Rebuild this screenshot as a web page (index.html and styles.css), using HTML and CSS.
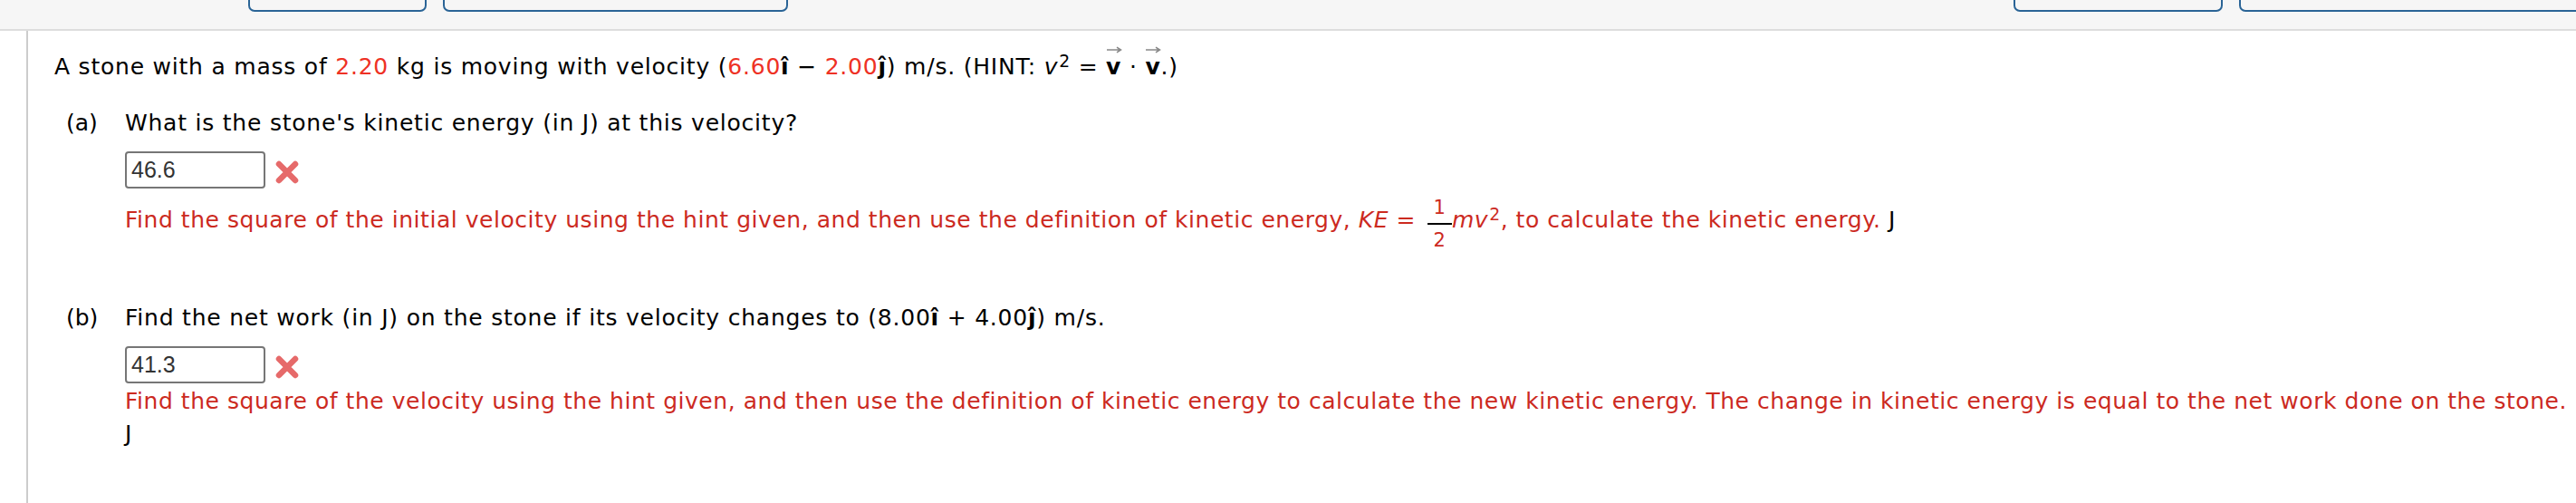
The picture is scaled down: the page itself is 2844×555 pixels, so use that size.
FILE: index.html
```html
<!DOCTYPE html>
<html lang="en">
<head>
    <meta charset="UTF-8">
    <title>Kinetic energy of a stone</title>
    <link rel="stylesheet" href="styles.css">
</head>
<body>
    <!-- 顶部工具栏（按钮只露出底边） -->
    <div class="toolbar">
        <span class="tool-btn btn-a"></span>
        <span class="tool-btn btn-b"></span>
        <span class="tool-btn btn-c"></span>
        <span class="tool-btn btn-d"></span>
    </div>

    <div class="question">
        <p class="stem">A stone with a mass of <span class="num">2.20</span> kg is moving with velocity (<span class="num">6.60</span><b>î</b> − <span class="num">2.00</span><b>ĵ</b>) m/s. (HINT: <i>v</i><sup>2</sup> = <b class="vec">v<svg class="vec-arrow" viewBox="0 0 18 8"><path d="M1 4H16M12 1.2L16.4 4L12 6.8"/></svg></b> · <b class="vec">v<svg class="vec-arrow" viewBox="0 0 18 8"><path d="M1 4H16M12 1.2L16.4 4L12 6.8"/></svg></b>.)</p>

        <!-- (a) -->
        <div class="part part-a">
            <span class="part-label">(a)</span>
            <div class="part-body">
                <p class="prompt">What is the stone's kinetic energy (in J) at this velocity?</p>
                <div class="answer-row">
                    <input class="answer" type="text" value="46.6" readonly>
                    <svg class="wrong" viewBox="0 0 28 28"><path d="M5 5L23 23M23 5L5 23"/></svg>
                </div>
                <p class="feedback">Find the square of the initial velocity using the hint given, and then use the definition of kinetic energy, <i>KE</i> = <span class="frac"><span class="frac-num">1</span><span class="frac-den">2</span></span><i>mv</i><sup>2</sup>, to calculate the kinetic energy. <span class="unit">J</span></p>
            </div>
        </div>

        <!-- (b) -->
        <div class="part part-b">
            <span class="part-label">(b)</span>
            <div class="part-body">
                <p class="prompt">Find the net work (in J) on the stone if its velocity changes to (8.00<b>î</b> + 4.00<b>ĵ</b>) m/s.</p>
                <div class="answer-row">
                    <input class="answer" type="text" value="41.3" readonly>
                    <svg class="wrong" viewBox="0 0 28 28"><path d="M5 5L23 23M23 5L5 23"/></svg>
                </div>
                <p class="feedback">Find the square of the velocity using the hint given, and then use the definition of kinetic energy to calculate the new kinetic energy. The change in kinetic energy is equal to the net work done on the stone. <span class="unit">J</span></p>
            </div>
        </div>
    </div>
</body>
</html>
```

FILE: styles.css
```css
body {
    margin: 0;
    font-family: "DejaVu Sans", Verdana, sans-serif;
    font-size: 25px;
    color: #000;
    background: #fff;
}
p {
    margin: 0;
}

/* 工具栏 */
.toolbar {
    display: flex;
    gap: 18px;
    height: 32px;
    padding-left: 274px;
    background: #f6f6f6;
    border-bottom: 2px solid #dddddd;
    overflow: hidden;
}
.tool-btn {
    flex-shrink: 0;
    box-sizing: border-box;
    height: 33px;
    margin-top: -20px;
    border: 2px solid #2a6496;
    border-radius: 7px;
}
.btn-a { width: 197px; }
.btn-b { width: 381px; }
.btn-c { width: 231px; margin-left: 1335px; }
.btn-d { width: 420px; }

/* 题目区域 */
.question {
    box-sizing: border-box;
    min-height: 521px;
    margin-left: 29px;
    padding: 22px 0 0 29px;
    border-left: 2px solid #cccccc;
    line-height: 36px;
}
.stem,
.prompt {
    letter-spacing: 0.78px;
}
.num {
    color: #ee3124;
}
sup {
    font-size: 0.75em;
    line-height: 0;
    margin-left: 1px;
    vertical-align: 0.42em;
}
.vec {
    position: relative;
}
.vec-arrow {
    position: absolute;
    left: 0;
    top: -8px;
    width: 18px;
    height: 8px;
    fill: none;
    stroke: #888;
    stroke-width: 1.6;
}

/* 小题 */
.part {
    display: flex;
    padding-left: 13px;
}
.part-a {
    margin-top: 26px;
}
.part-b {
    margin-top: 58px;
}
.part-label {
    width: 65px;
    flex-shrink: 0;
}
.part-body {
    flex: 1;
}
.answer-row {
    display: flex;
    align-items: center;
    gap: 10px;
    margin-top: 13px;
}
.answer {
    box-sizing: border-box;
    width: 155px;
    height: 41px;
    margin: 0;
    padding: 0 5px;
    border: 2px solid #767676;
    border-radius: 4px;
    font-family: "Liberation Sans", Arial, sans-serif;
    font-size: 25px;
    color: #333;
    outline: none;
}
.wrong {
    width: 28px;
    height: 28px;
    margin-top: 5px;
    fill: none;
    stroke: #e66a6a;
    stroke-width: 6.5;
    stroke-linecap: round;
    filter: blur(0.4px);
}
.feedback {
    margin-top: 2px;
    color: #cc2a1f;
    letter-spacing: 0.54px;
}
.unit {
    color: #000;
}

/* 分数 1/2 */
.frac {
    display: inline-flex;
    flex-direction: column;
    margin-left: 4px;
    vertical-align: 15px;
    text-align: center;
    font-size: 21px;
    line-height: 20px;
    letter-spacing: 0;
}
.frac-num {
    padding: 9px 7px 7px;
}
.frac-den {
    padding: 7px 7px 0;
    border-top: 2px solid #000;
}
```
